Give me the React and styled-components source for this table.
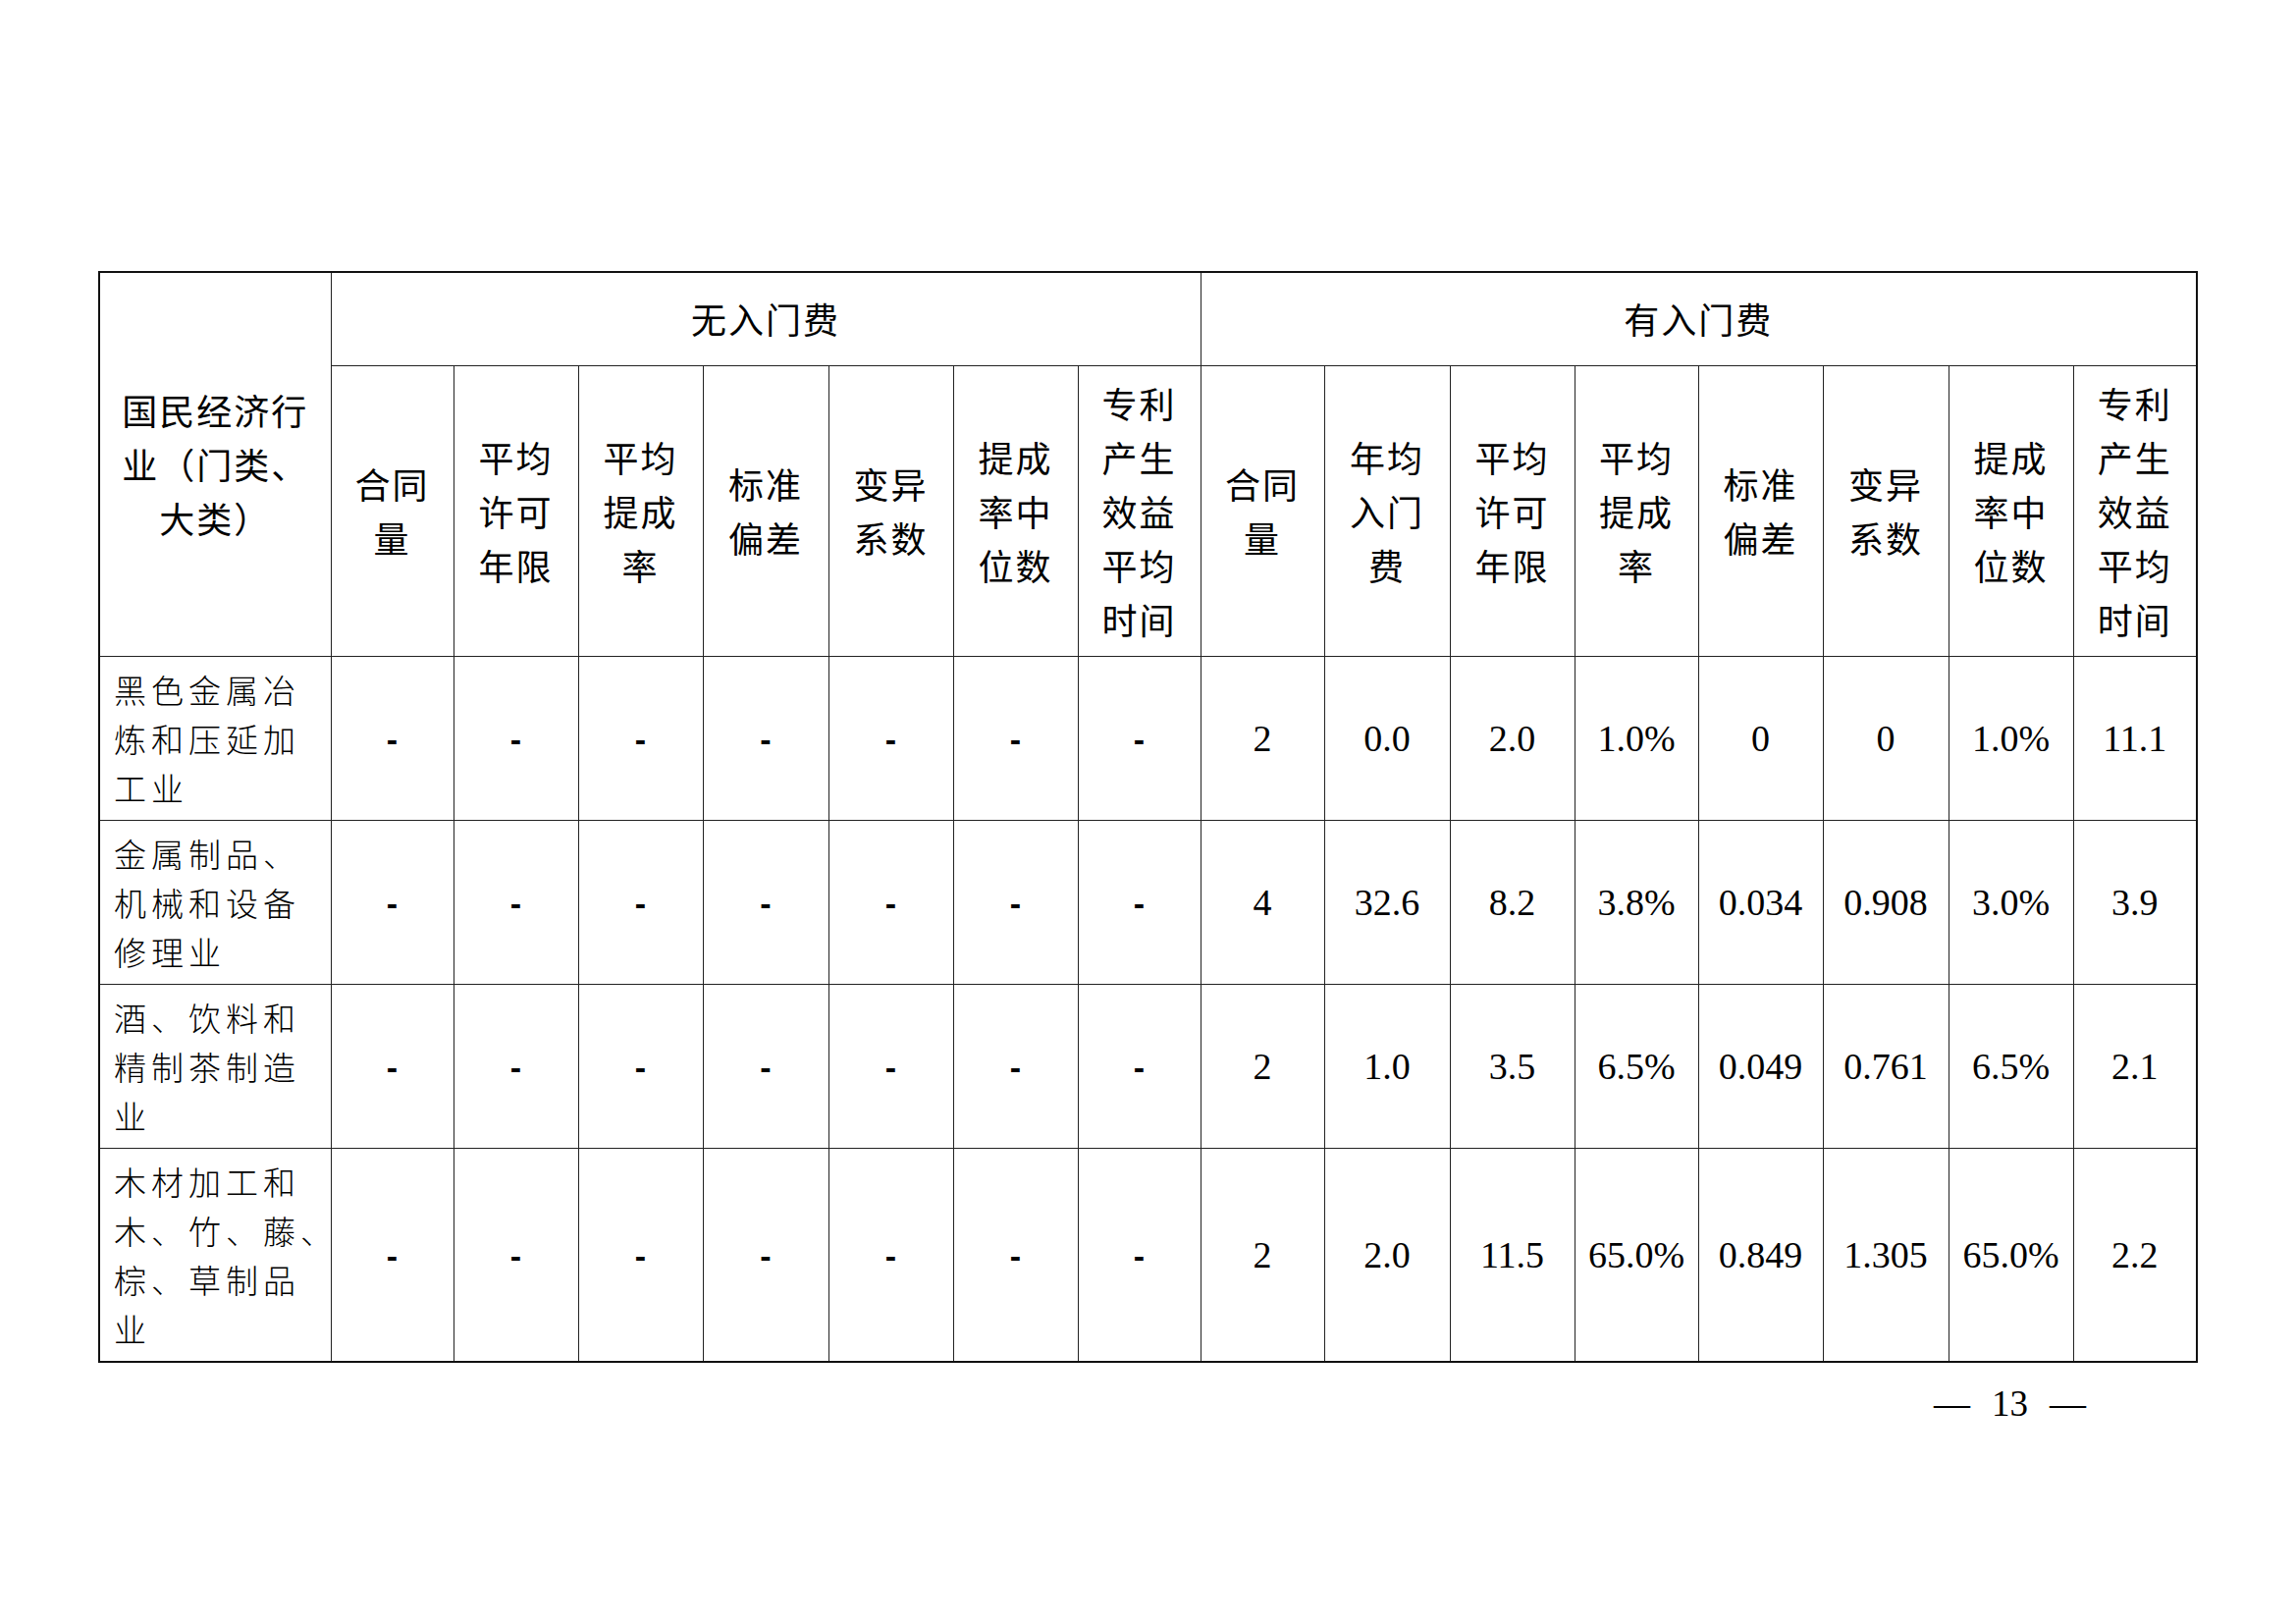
import React from 'react';
import styled, {createGlobalStyle} from "styled-components";

const GlobalStyle = createGlobalStyle`
  html, body {
    margin: 0;
    padding: 0;
    background: #ffffff;
  }
`

const widths = [236, 125, 127, 127, 128, 127, 127, 125, 126, 128, 127, 126, 127, 128, 127, 126]

const noFeeHeads = [
    ["合同", "量"],
    ["平均", "许可", "年限"],
    ["平均", "提成", "率"],
    ["标准", "偏差"],
    ["变异", "系数"],
    ["提成", "率中", "位数"],
    ["专利", "产生", "效益", "平均", "时间"],
]

const feeHeads = [
    ["合同", "量"],
    ["年均", "入门", "费"],
    ["平均", "许可", "年限"],
    ["平均", "提成", "率"],
    ["标准", "偏差"],
    ["变异", "系数"],
    ["提成", "率中", "位数"],
    ["专利", "产生", "效益", "平均", "时间"],
]

const rows = [
    {label: ["黑色金属冶", "炼和压延加", "工业"], height: 167, values: ["2", "0.0", "2.0", "1.0%", "0", "0", "1.0%", "11.1"]},
    {label: ["金属制品、", "机械和设备", "修理业"], height: 167, values: ["4", "32.6", "8.2", "3.8%", "0.034", "0.908", "3.0%", "3.9"]},
    {label: ["酒、饮料和", "精制茶制造", "业"], height: 167, values: ["2", "1.0", "3.5", "6.5%", "0.049", "0.761", "6.5%", "2.1"]},
    {label: ["木材加工和", "木、竹、藤、", "棕、草制品", "业"], height: 218, values: ["2", "2.0", "11.5", "65.0%", "0.849", "1.305", "65.0%", "2.2"]},
]

function Lines({lines}) {
    return lines.map((line, i) => <Line key={i}>{line}</Line>)
}

function App() {
    return (
        <Page>
            <GlobalStyle/>
            <Sheet>
                <colgroup>
                    {widths.map((w, i) => <col key={i} style={{width: w}}/>)}
                </colgroup>
                <thead>
                <Row $h={95}>
                    <HeadCell rowSpan={2}>
                        <Lines lines={["国民经济行", "业（门类、", "大类）"]}/>
                    </HeadCell>
                    <HeadCell colSpan={7}>无入门费</HeadCell>
                    <HeadCell colSpan={8}>有入门费</HeadCell>
                </Row>
                <Row $h={296}>
                    {noFeeHeads.map((h, i) => (
                        <HeadCell key={"n" + i}><Lines lines={h}/></HeadCell>
                    ))}
                    {feeHeads.map((h, i) => (
                        <HeadCell key={"f" + i}><Lines lines={h}/></HeadCell>
                    ))}
                </Row>
                </thead>
                <tbody>
                {rows.map((row, index) => (
                    <Row key={index} $h={row.height}>
                        <LabelCell><Lines lines={row.label}/></LabelCell>
                        {Array.from({length: 7}).map((_, i) => (
                            <ValueCell key={"d" + i}><Dash>-</Dash></ValueCell>
                        ))}
                        {row.values.map((v, i) => (
                            <ValueCell key={"v" + i}>{v}</ValueCell>
                        ))}
                    </Row>
                ))}
                </tbody>
            </Sheet>
            <Footer>
                <PageNo>
                    <span>—</span>
                    <span>13</span>
                    <span>—</span>
                </PageNo>
            </Footer>
        </Page>
    );
}

const Page = styled.div`
  padding: 276px 0 0 100px;
  width: 2137px;
  color: #000;
`

const Sheet = styled.table`
  border-collapse: collapse;
  table-layout: fixed;
  width: 2137px;
  border: 2px solid #111;
`

const Row = styled.tr`
  height: ${props => props.$h}px;
`

const HeadCell = styled.th`
  border: 1.5px solid #222;
  padding: 0;
  font-family: "Noto Sans CJK SC", sans-serif;
  font-weight: 400;
  font-size: 36px;
  letter-spacing: 2px;
  line-height: 55px;
  text-align: center;
  vertical-align: middle;
  color: #000;
`

const Line = styled.span`
  display: block;
  white-space: nowrap;
`

const LabelCell = styled.td`
  border: 1.5px solid #222;
  padding: 0 6px 0 14px;
  font-family: "Noto Sans CJK SC", sans-serif;
  font-weight: 300;
  font-size: 33px;
  letter-spacing: 5px;
  line-height: 50px;
  text-align: left;
  vertical-align: middle;
  overflow: visible;
`

const ValueCell = styled.td`
  border: 1.5px solid #222;
  padding: 0;
  font-family: "Liberation Serif", "Times New Roman", serif;
  font-size: 38px;
  text-align: center;
  vertical-align: middle;
  white-space: nowrap;
`

const Dash = styled.span`
  font-family: "Liberation Sans", Arial, sans-serif;
  font-size: 34px;
  font-weight: 700;
`

const Footer = styled.div`
  display: flex;
  justify-content: flex-end;
  padding-right: 112px;
  margin-top: 23px;
`

const PageNo = styled.div`
  display: flex;
  gap: 22px;
  font-family: "Liberation Serif", "Times New Roman", serif;
  font-size: 37px;
  line-height: 1;
`

export default App;
